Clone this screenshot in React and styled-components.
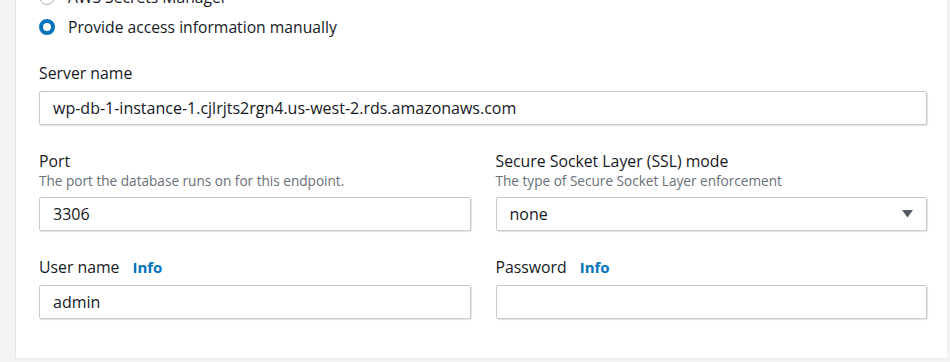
import React from "react";
import styled, { createGlobalStyle } from "styled-components";

const Global = createGlobalStyle`
  html, body { margin: 0; padding: 0; }
  body {
    background: #f2f3f3;
    font-family: "Open Sans", "Noto Sans", sans-serif;
    color: #16191f;
    overflow: hidden;
  }
`;

const Page = styled.div`
  height: 362px;
  padding: 0 2px 0 15px;
  box-sizing: border-box;
  overflow: hidden;
`;

const Panel = styled.section`
  margin-top: -18px;
  background: #fff;
  border-left: 1px solid #e3e6e6;
  border-right: 1px solid #eef0f0;
  border-bottom: 1px solid #eaeded;
  padding: 0 20px 39px 23px;
`;

const RadioGroup = styled.div`
  display: flex;
  flex-direction: column;
  margin-bottom: 20px;
`;

const RadioRow = styled.label`
  display: flex;
  align-items: center;
  gap: 13px;
  height: 30px;
  font-size: 15.7px;
`;

const RadioDot = styled.span`
  box-sizing: border-box;
  width: 16px;
  height: 16px;
  border-radius: 50%;
  flex: none;
  background: #fff;
  border: ${(p) => (p.$checked ? "4.5px solid #0073bb" : "1.5px solid #aab7b8")};
`;

const Form = styled.div`
  display: grid;
  grid-template-columns: 1fr 1fr;
  column-gap: 25px;
  row-gap: 25px;
`;

const Field = styled.div`
  display: flex;
  flex-direction: column;
  grid-column: ${(p) => (p.$full ? "1 / -1" : "auto")};
`;

const Label = styled.div`
  font-size: 15.8px;
  line-height: 22px;
  display: flex;
  align-items: center;
  gap: 13px;
`;

const Info = styled.span`
  color: #0073bb;
  font-weight: 700;
  font-size: 15px;
`;

const Desc = styled.div`
  font-size: 13.6px;
  line-height: 18px;
  color: #687078;
`;

const Input = styled.div`
  margin-top: 7px;
  height: 34px;
  box-sizing: border-box;
  border: 1px solid #c4cbcc;
  border-radius: 2px;
  box-shadow: 1px 1px 1px rgba(0, 0, 0, 0.12);
  padding: 0 13px;
  display: flex;
  align-items: center;
  justify-content: space-between;
  font-size: 16px;
  color: #16191f;
`;

const Caret = () => (
  <svg width="11" height="8" viewBox="0 0 11 8">
    <path d="M0 0 H11 L5.5 7.5 Z" fill="#545b64" />
  </svg>
);

export default function App() {
  return (
    <>
      <Global />
      <Page>
        <Panel>
          <RadioGroup>
            <RadioRow>
              <RadioDot />
              AWS Secrets Manager
            </RadioRow>
            <RadioRow>
              <RadioDot $checked />
              Provide access information manually
            </RadioRow>
          </RadioGroup>
          <Form>
            <Field $full>
              <Label>Server name</Label>
              <Input>wp-db-1-instance-1.cjlrjts2rgn4.us-west-2.rds.amazonaws.com</Input>
            </Field>
            <Field>
              <Label>Port</Label>
              <Desc>The port the database runs on for this endpoint.</Desc>
              <Input>3306</Input>
            </Field>
            <Field>
              <Label>Secure Socket Layer (SSL) mode</Label>
              <Desc>The type of Secure Socket Layer enforcement</Desc>
              <Input>
                none
                <Caret />
              </Input>
            </Field>
            <Field>
              <Label>
                User name <Info>Info</Info>
              </Label>
              <Input>admin</Input>
            </Field>
            <Field>
              <Label>
                Password <Info>Info</Info>
              </Label>
              <Input />
            </Field>
          </Form>
        </Panel>
      </Page>
    </>
  );
}
